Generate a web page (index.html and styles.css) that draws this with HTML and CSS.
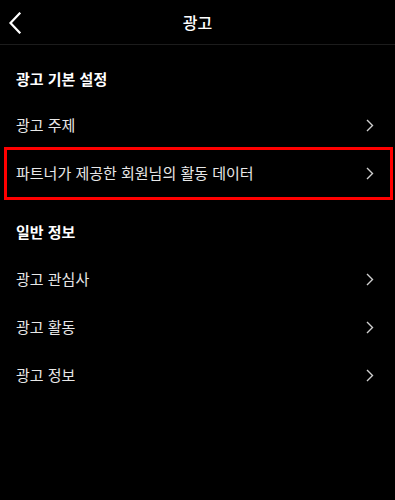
FILE: index.html
```html
<!DOCTYPE html>
<html lang="ko">
<head>
<meta charset="utf-8">
<link rel="stylesheet" href="styles.css">
</head>
<body>
<div class="page">
  <header class="topbar">
    <span class="back">
      <svg width="14" height="22" viewBox="0 0 14 22"><path d="M11.5 1.5 L2.5 11 L11.5 20.5" fill="none" stroke="#fff" stroke-width="2.2" stroke-linecap="square"/></svg>
    </span>
    <h1 class="title">광고</h1>
  </header>

  <section class="group">
    <h2 class="group-title first">광고 기본 설정</h2>
    <div class="row"><span class="label">광고 주제</span><span class="chev"><svg width="8" height="13" viewBox="0 0 8 13"><path d="M1 1 L6.5 6.5 L1 12" fill="none" stroke="#cfcfcf" stroke-width="1.4"/></svg></span></div>
    <div class="row highlighted"><span class="label">파트너가 제공한 회원님의 활동 데이터</span><span class="chev"><svg width="8" height="13" viewBox="0 0 8 13"><path d="M1 1 L6.5 6.5 L1 12" fill="none" stroke="#cfcfcf" stroke-width="1.4"/></svg></span></div>
  </section>

  <section class="group">
    <h2 class="group-title second">일반 정보</h2>
    <div class="row"><span class="label">광고 관심사</span><span class="chev"><svg width="8" height="13" viewBox="0 0 8 13"><path d="M1 1 L6.5 6.5 L1 12" fill="none" stroke="#cfcfcf" stroke-width="1.4"/></svg></span></div>
    <div class="row"><span class="label">광고 활동</span><span class="chev"><svg width="8" height="13" viewBox="0 0 8 13"><path d="M1 1 L6.5 6.5 L1 12" fill="none" stroke="#cfcfcf" stroke-width="1.4"/></svg></span></div>
    <div class="row"><span class="label">광고 정보</span><span class="chev"><svg width="8" height="13" viewBox="0 0 8 13"><path d="M1 1 L6.5 6.5 L1 12" fill="none" stroke="#cfcfcf" stroke-width="1.4"/></svg></span></div>
  </section>
</div>
</body>
</html>
```

FILE: styles.css
```css
html, body {
  margin: 0;
  padding: 0;
  background: #000;
}
body {
  font-family: "Noto Sans CJK KR", "Noto Sans", sans-serif;
  color: #fff;
  width: 395px;
  height: 500px;
  overflow: hidden;
}
.page {
  display: flex;
  flex-direction: column;
}
.topbar {
  height: 44px;
  border-bottom: 1px solid #1c1c1c;
  display: flex;
  align-items: center;
  justify-content: center;
  position: relative;
}
.back {
  position: absolute;
  left: 8px;
  top: 12px;
  display: flex;
}
.title {
  margin: 0;
  font-size: 16px;
  font-weight: 500;
  line-height: 24px;
  color: #fff;
}
.group {
  display: flex;
  flex-direction: column;
}
.group-title {
  margin: 0;
  font-size: 15px;
  font-weight: 700;
  line-height: 24px;
  padding: 0 16px;
  color: #fff;
}
.group-title.first {
  padding-top: 22px;
  padding-bottom: 10px;
}
.group-title.second {
  padding-top: 23px;
  padding-bottom: 11px;
}
.row {
  height: 48px;
  display: flex;
  align-items: center;
  justify-content: space-between;
  padding: 0 21px 0 16px;
  position: relative;
}
.label {
  font-size: 15px;
  color: #e8e8e8;
  line-height: 24px;
}
.chev {
  display: flex;
}
.highlighted::after {
  content: "";
  position: absolute;
  top: -2px;
  bottom: -3px;
  left: 4px;
  right: 2px;
  border: 3px solid #f00;
}
```
